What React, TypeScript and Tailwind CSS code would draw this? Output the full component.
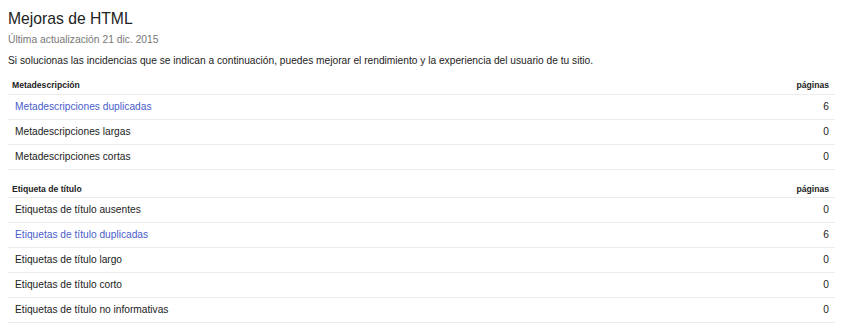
import React from "react";

type Row = { label: string; value: string; link?: boolean };

const sections: { title: string; rows: Row[] }[] = [
  {
    title: "Metadescripción",
    rows: [
      { label: "Metadescripciones duplicadas", value: "6", link: true },
      { label: "Metadescripciones largas", value: "0" },
      { label: "Metadescripciones cortas", value: "0" },
    ],
  },
  {
    title: "Etiqueta de título",
    rows: [
      { label: "Etiquetas de título ausentes", value: "0" },
      { label: "Etiquetas de título duplicadas", value: "6", link: true },
      { label: "Etiquetas de título largo", value: "0" },
      { label: "Etiquetas de título corto", value: "0" },
      { label: "Etiquetas de título no informativas", value: "0" },
    ],
  },
];

export default function App() {
  return (
    <div
      className="w-[850px] h-[330px] bg-white pl-[8px] text-[#222]"
      style={{ fontFamily: '"Liberation Sans", Arial, sans-serif' }}
    >
      <div className="pt-[8px] text-[15.7px] leading-[22px] h-[30px]">Mejoras de HTML</div>
      <div className="text-[10.3px] leading-[20px] text-[#777]">Última actualización 21 dic. 2015</div>
      <div className="mt-[2px] text-[10.2px] leading-[18px]">
        Si solucionas las incidencias que se indican a continuación, puedes mejorar el rendimiento y la experiencia del usuario de tu sitio.
      </div>
      <div className="w-[827px]">
        {sections.map((s, i) => (
          <div key={s.title} className={i > 0 ? "mt-[3px]" : ""}>
            <div
              className={`h-[25px] leading-[14px] border-b border-[#ebebeb] flex justify-between pl-[4px] pr-[6px] text-[8.6px] font-bold ${
                i > 0 ? "pt-[9px]" : "pt-[8px]"
              }`}
            >
              <span>{s.title}</span>
              <span>páginas</span>
            </div>
            {s.rows.map((r) => (
              <div
                key={r.label}
                className="h-[25px] border-b border-[#ebebeb] flex items-center justify-between pl-[7px] pr-[6px] text-[10.2px]"
              >
                <span className={r.link ? "text-[#4a5dcc]" : ""}>{r.label}</span>
                <span>{r.value}</span>
              </div>
            ))}
          </div>
        ))}
      </div>
    </div>
  );
}
